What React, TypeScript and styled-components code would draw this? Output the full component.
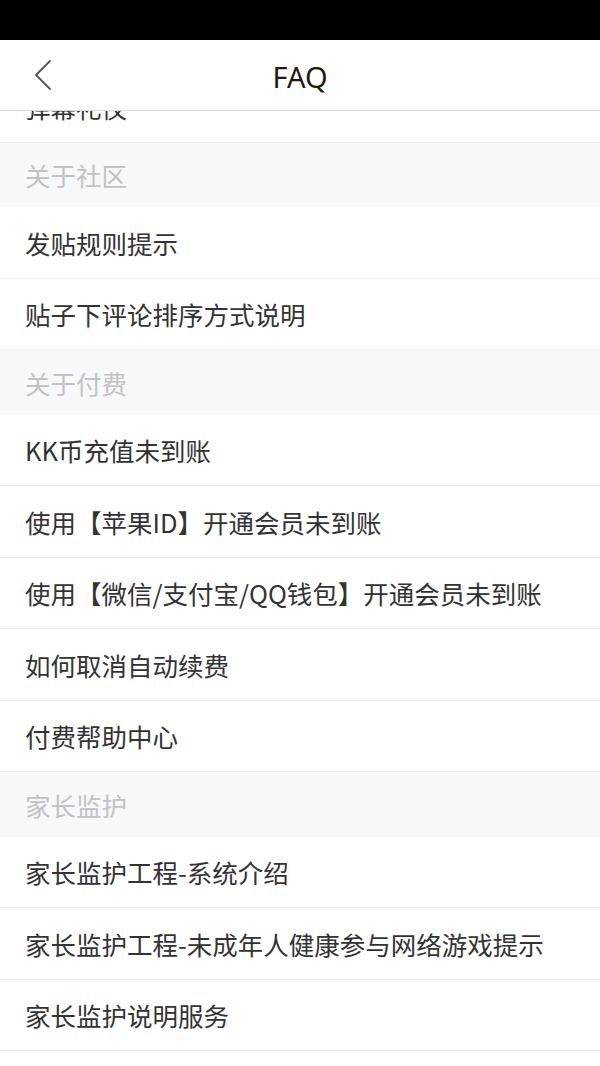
import React from "react";
import styled, { createGlobalStyle } from "styled-components";

const Global = createGlobalStyle`
  html, body { margin: 0; padding: 0; background: #fff; }
  body { font-family: "Noto Sans CJK SC", "Noto Sans", sans-serif; }
  * { box-sizing: border-box; }
`;

const Page = styled.div`
  width: 600px;
  height: 1066px;
  display: flex;
  flex-direction: column;
  overflow: hidden;
  background: #fff;
`;

const StatusBar = styled.div`
  height: 40px;
  flex: none;
  background: #000;
`;

const Header = styled.header`
  height: 71px;
  flex: none;
  display: grid;
  grid-template-columns: 80px 1fr 80px;
  align-items: center;
  background: #fff;
  border-bottom: 1px solid #dcdcdc;
  position: relative;
  z-index: 1;
`;

const BackButton = styled.button`
  border: none;
  background: none;
  padding: 0 0 0 33px;
  height: 100%;
  display: flex;
  align-items: center;
  cursor: pointer;
`;

const Title = styled.h1`
  margin: 0;
  text-align: center;
  font-family: "Noto Sans", "Noto Sans CJK SC", sans-serif;
  font-weight: 400;
  font-size: 29px;
  color: #1e1a14;
  line-height: 1;
  padding-top: 2px;
`;

const Viewport = styled.div`
  flex: 1;
  overflow: hidden;
`;

const List = styled.div<{ $offset: number }>`
  display: flex;
  flex-direction: column;
  margin-top: ${(p) => -p.$offset}px;
`;

const SectionHeader = styled.div`
  height: 64.5px;
  display: flex;
  align-items: center;
  padding-left: 25px;
  background: #f7f8fa;
  color: #c2c2c2;
  font-size: 25.5px;
  line-height: 1;
`;

const Item = styled.div`
  height: 71.5px;
  display: flex;
  align-items: center;
  padding-left: 25px;
  background: #fff;
  color: #333;
  font-size: 25.5px;
  line-height: 1;
  border-bottom: 1px solid #eeeeee;
  white-space: nowrap;
`;

type Section = { title?: string; items: string[] };

const sections: Section[] = [
  { items: ["弹幕礼仪"] },
  { title: "关于社区", items: ["发贴规则提示", "贴子下评论排序方式说明"] },
  {
    title: "关于付费",
    items: [
      "KK币充值未到账",
      "使用【苹果ID】开通会员未到账",
      "使用【微信/支付宝/QQ钱包】开通会员未到账",
      "如何取消自动续费",
      "付费帮助中心",
    ],
  },
  {
    title: "家长监护",
    items: [
      "家长监护工程-系统介绍",
      "家长监护工程-未成年人健康参与网络游戏提示",
      "家长监护说明服务",
    ],
  },
];

const BackIcon = () => (
  <svg width="20" height="32" viewBox="0 0 20 32" fill="none">
    <path d="M17 2 L3 16 L17 30" stroke="#555" strokeWidth="1.8" strokeLinecap="round" strokeLinejoin="round" />
  </svg>
);

export default function App() {
  return (
    <>
      <Global />
      <Page>
        <StatusBar />
        <Header>
          <BackButton aria-label="back">
            <BackIcon />
          </BackButton>
          <Title>FAQ</Title>
          <div />
        </Header>
        <Viewport>
          <List $offset={40}>
            {sections.map((s, i) => (
              <React.Fragment key={i}>
                {s.title && <SectionHeader>{s.title}</SectionHeader>}
                {s.items.map((it) => (
                  <Item key={it}>{it}</Item>
                ))}
              </React.Fragment>
            ))}
          </List>
        </Viewport>
      </Page>
    </>
  );
}
